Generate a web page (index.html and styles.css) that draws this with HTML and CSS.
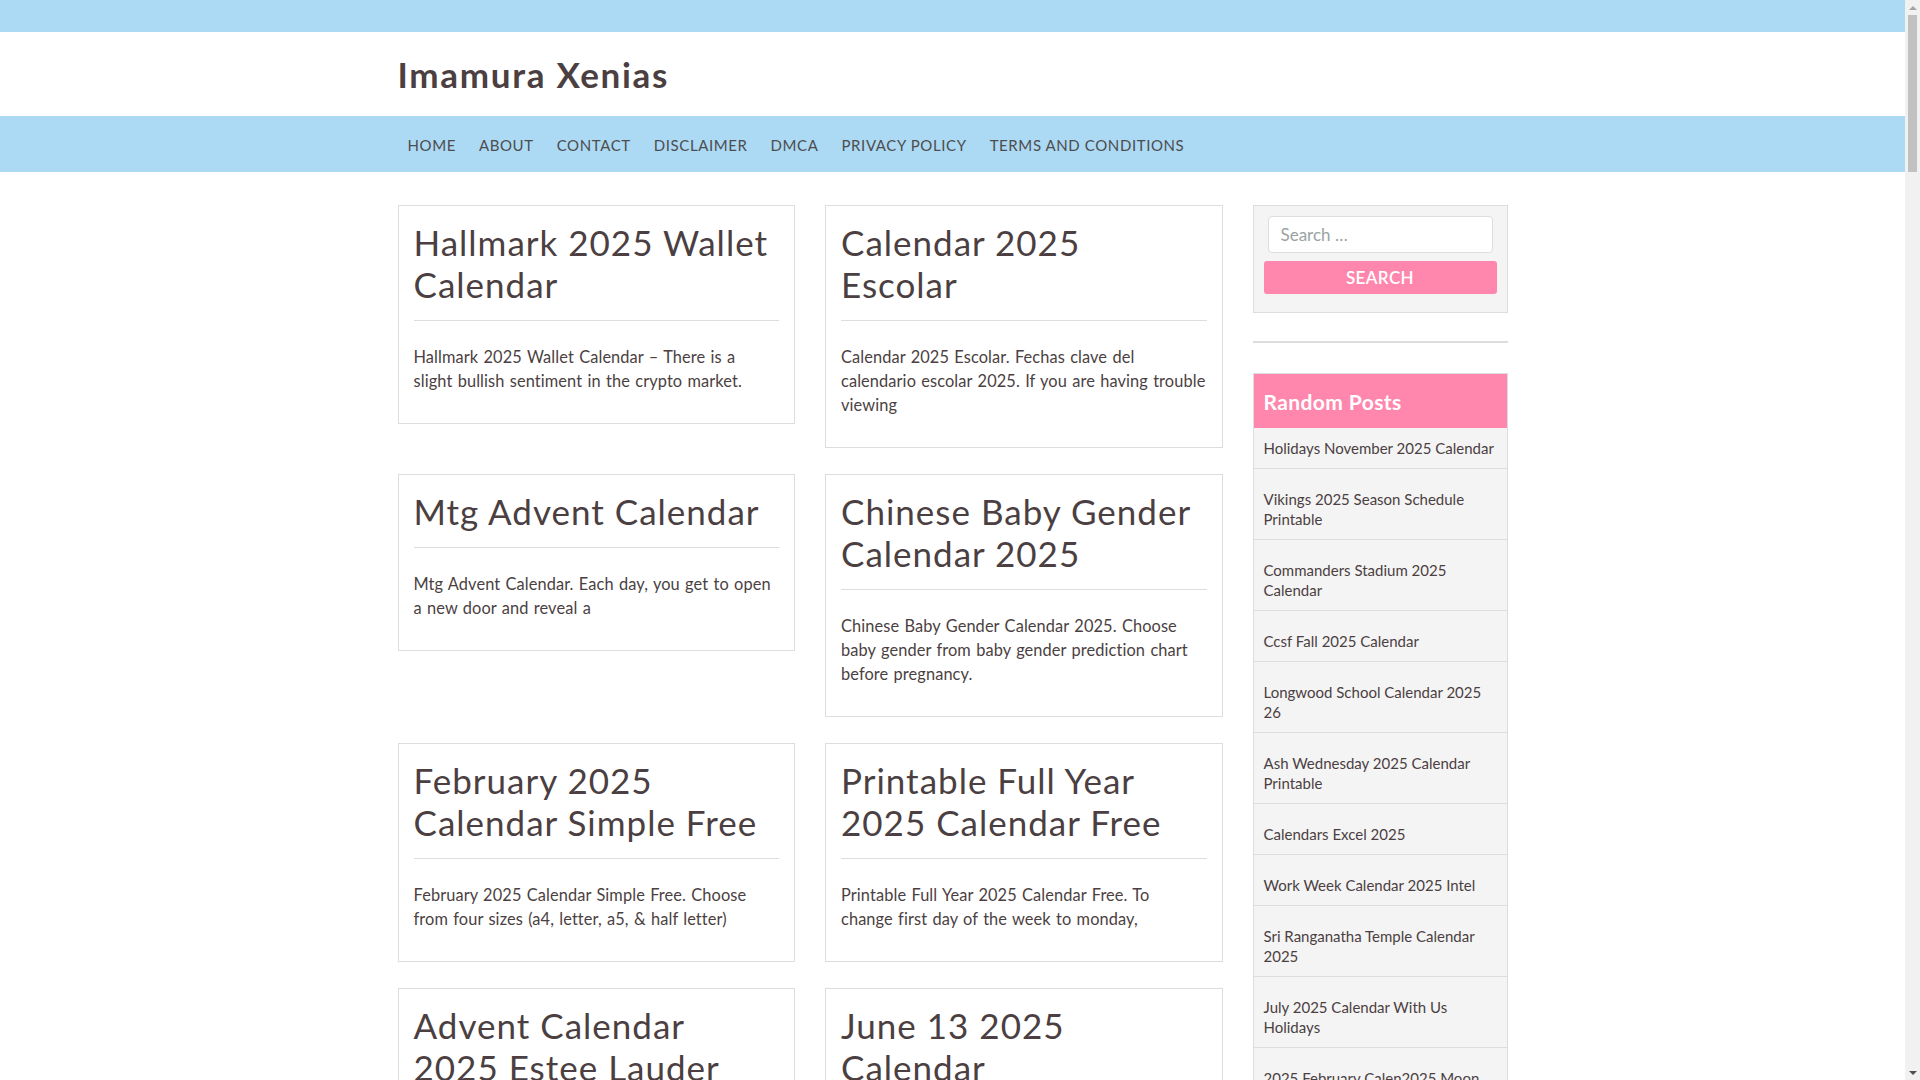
FILE: index.html
```html
<!DOCTYPE html>
<html lang="en">
<head>
<meta charset="utf-8">
<title>Imamura Xenias</title>
<link rel="stylesheet" href="styles.css">
</head>
<body>
<div class="topbar"></div>
<header class="site-header">
  <div class="container">
    <a class="site-title" href="#">Imamura Xenias</a>
  </div>
</header>
<nav class="main-nav">
  <div class="container">
    <ul class="menu">
      <li><a href="#">Home</a></li>
      <li><a href="#">About</a></li>
      <li><a href="#">Contact</a></li>
      <li><a href="#">Disclaimer</a></li>
      <li><a href="#">DMCA</a></li>
      <li><a href="#">Privacy Policy</a></li>
      <li><a href="#">Terms and Conditions</a></li>
    </ul>
  </div>
</nav>
<div class="container">
  <div class="layout">
    <main class="posts">
      <article class="card">
        <h2 class="card-title">Hallmark 2025 Wallet Calendar</h2>
        <p class="card-text">Hallmark 2025 Wallet Calendar – There is a slight bullish sentiment in the crypto market.</p>
      </article>
      <article class="card">
        <h2 class="card-title">Calendar 2025 Escolar</h2>
        <p class="card-text">Calendar 2025 Escolar. Fechas clave del calendario escolar 2025. If you are having trouble viewing</p>
      </article>
      <article class="card">
        <h2 class="card-title">Mtg Advent Calendar</h2>
        <p class="card-text">Mtg Advent Calendar. Each day, you get to open a new door and reveal a</p>
      </article>
      <article class="card">
        <h2 class="card-title">Chinese Baby Gender Calendar 2025</h2>
        <p class="card-text">Chinese Baby Gender Calendar 2025. Choose baby gender from baby gender prediction chart before pregnancy.</p>
      </article>
      <article class="card">
        <h2 class="card-title">February 2025 Calendar Simple Free</h2>
        <p class="card-text">February 2025 Calendar Simple Free. Choose from four sizes (a4, letter, a5, &amp; half letter)</p>
      </article>
      <article class="card">
        <h2 class="card-title">Printable Full Year 2025 Calendar Free</h2>
        <p class="card-text">Printable Full Year 2025 Calendar Free. To change first day of the week to monday,</p>
      </article>
      <article class="card">
        <h2 class="card-title">Advent Calendar 2025 Estee Lauder</h2>
        <p class="card-text">Advent Calendar 2025 Estee Lauder. Discover the beauty advent calendar for the holiday season.</p>
      </article>
      <article class="card">
        <h2 class="card-title">June 13 2025 Calendar</h2>
        <p class="card-text">June 13 2025 Calendar. View the full calendar for the month of june 2025.</p>
      </article>
    </main>
    <aside class="sidebar">
      <section class="widget search-widget">
        <form class="search-form">
          <input class="search-field" type="search" placeholder="Search …">
          <button class="search-submit" type="button">Search</button>
        </form>
      </section>
      <hr class="widget-sep">
      <section class="widget random-widget">
        <h3 class="widget-title">Random Posts</h3>
        <ul class="post-list">
          <li><a href="#">Holidays November 2025 Calendar</a></li>
          <li><a href="#">Vikings 2025 Season Schedule Printable</a></li>
          <li><a href="#">Commanders Stadium 2025 Calendar</a></li>
          <li><a href="#">Ccsf Fall 2025 Calendar</a></li>
          <li><a href="#">Longwood School Calendar 2025 26</a></li>
          <li><a href="#">Ash Wednesday 2025 Calendar Printable</a></li>
          <li><a href="#">Calendars Excel 2025</a></li>
          <li><a href="#">Work Week Calendar 2025 Intel</a></li>
          <li><a href="#">Sri Ranganatha Temple Calendar 2025</a></li>
          <li><a href="#">July 2025 Calendar With Us Holidays</a></li>
          <li><a href="#">2025 February Calen2025 Moon Calendar</a></li>
          <li><a href="#">Printable 2025 Calendar With Holidays</a></li>
        </ul>
      </section>
    </aside>
  </div>
</div>
<div class="scrollbar" aria-hidden="true">
  <span class="sb-arrow sb-up"></span>
  <span class="sb-thumb"></span>
  <span class="sb-track"></span>
  <span class="sb-arrow sb-down"></span>
</div>
</body>
</html>
```
FILE: styles.css
```css
* { box-sizing: border-box; }

body {
  margin: 0;
  padding-right: 15px;
  font-family: Lato, "Noto Sans", sans-serif;
  color: #4b3f42;
  background: #fff;
}

a { color: inherit; text-decoration: none; }

.container {
  width: 1140px;
  margin: 0 auto;
  padding: 0 15px;
}

.topbar {
  height: 32px;
  background: #acd9f4;
}

.site-header .container {
  height: 84px;
  display: flex;
  align-items: center;
}

.site-title {
  font-size: 35px;
  font-weight: 700;
  line-height: 1.2;
  letter-spacing: 1.7px;
  color: #4b3f42;
}

.main-nav {
  background: #acd9f4;
}

.main-nav .container {
  height: 56px;
  display: flex;
  align-items: center;
}

.menu {
  list-style: none;
  margin: 0;
  padding: 0 0 0 10px;
  display: flex;
  gap: 23px;
}

.menu a {
  font-size: 15px;
  text-transform: uppercase;
  letter-spacing: 0.6px;
  color: #4d4d4d;
}

.layout {
  display: grid;
  grid-template-columns: 825px 255px;
  column-gap: 30px;
  padding-top: 33px;
}

.posts {
  display: grid;
  grid-template-columns: 1fr 1fr;
  column-gap: 30px;
  row-gap: 26px;
  align-items: start;
}

.card {
  border: 1px solid #ddd;
  padding: 15px;
}

.card-title {
  margin: 0;
  padding-bottom: 15px;
  border-bottom: 1px solid #ddd;
  font-size: 35px;
  line-height: 42px;
  font-weight: 400;
  letter-spacing: 1px;
}

.card-text {
  margin: 24px 0 15px;
  font-size: 16.38px;
  line-height: 24px;
  letter-spacing: 0.1px;
  word-spacing: 1px;
}

.search-widget {
  border: 1px solid #ddd;
  background: #f4f4f4;
  padding: 10px 10px 18px;
}

.search-form {
  display: flex;
  flex-direction: column;
}

.search-field {
  margin: 0 4px;
  height: 37px;
  border: 1px solid #ddd;
  border-radius: 4px;
  padding: 0 12px;
  font-family: inherit;
  font-size: 17px;
  color: #4b3f42;
  background: #fff;
}

.search-field::placeholder { color: #9aa3a3; }

.search-submit {
  margin-top: 8px;
  height: 33px;
  border: 0;
  border-radius: 3px;
  background: #ff87ae;
  color: #fff;
  font-family: inherit;
  font-size: 17px;
  font-weight: 600;
  letter-spacing: 0.4px;
  text-transform: uppercase;
}

.widget-sep {
  margin: 28px 0 30px;
  border: 0;
  height: 2px;
  background: #ddd;
}

.random-widget {
  border: 1px solid #ddd;
  background: #f4f4f4;
}

.widget-title {
  margin: 0;
  height: 54px;
  display: flex;
  align-items: center;
  padding: 0 10px;
  background: #ff87ae;
  color: #fff;
  font-size: 21px;
  font-weight: 700;
  letter-spacing: 0.4px;
}

.post-list {
  list-style: none;
  margin: 0;
  padding: 0;
}

.post-list li {
  padding: 20px 10px 10px;
  border-bottom: 1px solid #ddd;
  font-size: 15px;
  line-height: 20px;
}

.post-list li:first-child { padding-top: 10px; }

/* imitation of the browser's vertical scrollbar */
.scrollbar {
  position: fixed;
  top: 0;
  right: 0;
  width: 15px;
  height: 100vh;
  background: #f1f1f1;
  display: flex;
  flex-direction: column;
  align-items: center;
}

.sb-arrow {
  height: 15px;
  width: 15px;
  display: flex;
  align-items: center;
  justify-content: center;
}

.sb-arrow::before {
  content: "";
  border-left: 4px solid transparent;
  border-right: 4px solid transparent;
}

.sb-up::before { border-bottom: 4px solid #a3a3a3; }
.sb-down::before { border-top: 4px solid #505050; }

.sb-thumb {
  width: 9px;
  height: 157px;
  background: #c1c1c1;
}

.sb-track { flex: 1; }
```
